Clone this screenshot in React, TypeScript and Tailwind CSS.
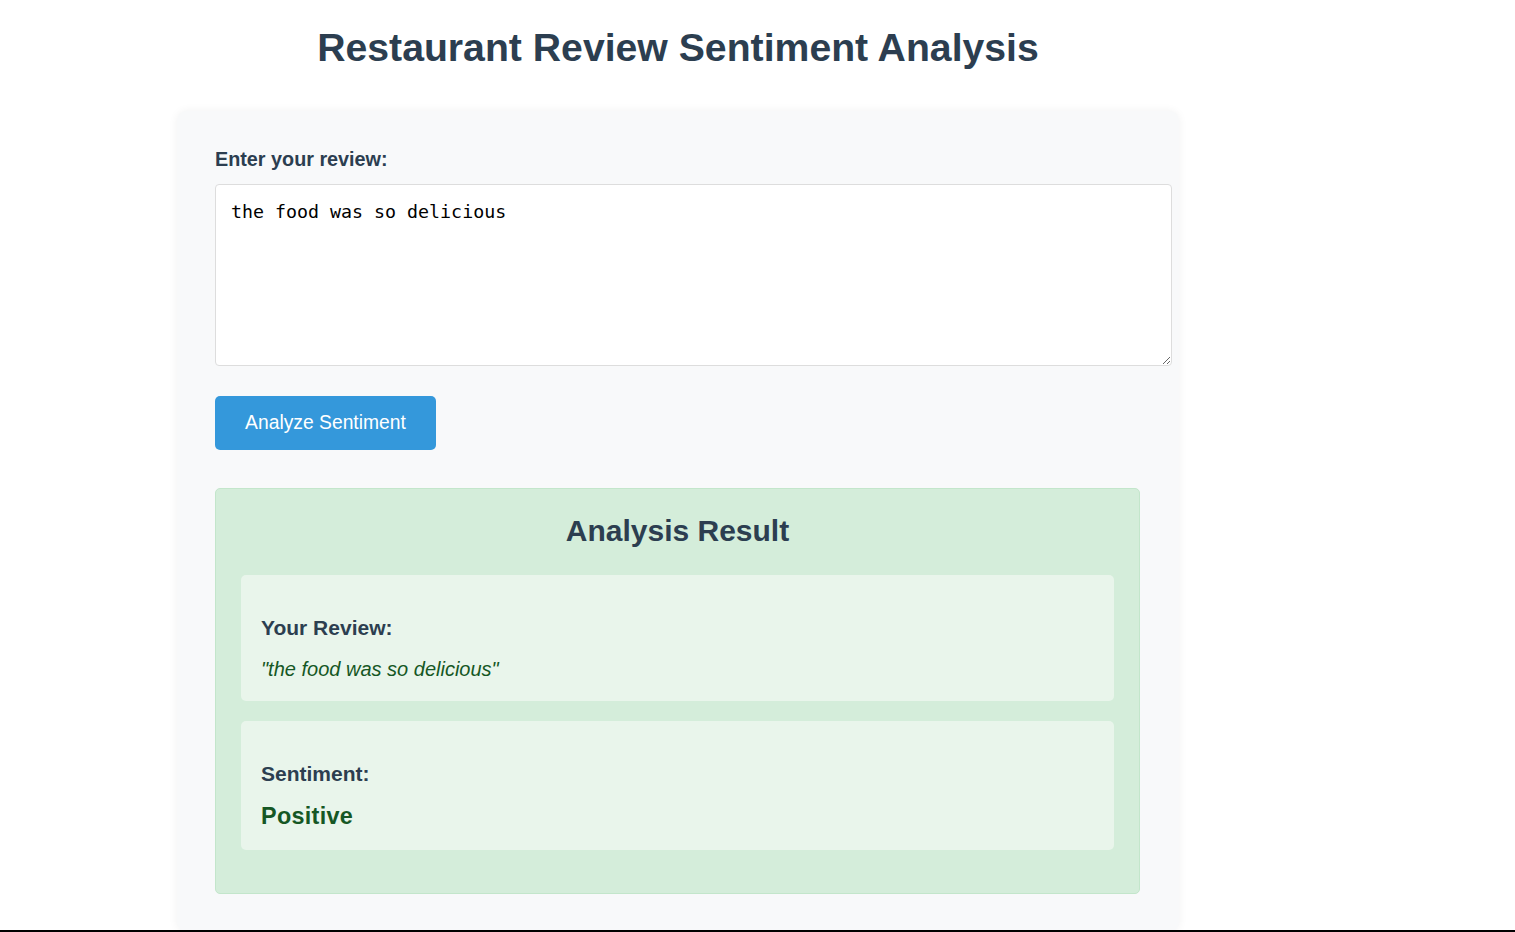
import { useState } from "react";
import type { ReactElement } from "react";

const sans = "font-['Liberation_Sans',Arial,sans-serif]";

function ResultBlock({ title, children }: { title: string; children: ReactElement }): ReactElement {
  return (
    <div className="rounded-[5px] bg-[#e9f5eb] px-[20px] pt-[41px] pb-[20px]">
      <h3 className="text-[21px] leading-[24px] font-bold text-[#2c3e50]">{title}</h3>
      {children}
    </div>
  );
}

export default function App(): ReactElement {
  const [review, setReview] = useState("the food was so delicious");

  return (
    <div className={`min-h-[932px] bg-white ${sans}`}>
      <h1 className="w-[1002px] ml-[177px] pt-[25px] text-center text-[39.2px] leading-[46px] font-bold text-[#2c3e50]">
        Restaurant Review Sentiment Analysis
      </h1>

      <main className="mt-[40px] ml-[177px] w-[1002px] rounded-[10px] bg-[#f8f9fa] pl-[38px] pr-[39px] pt-[37px] pb-[38px] shadow-[0_0_10px_rgba(0,0,0,0.06)]">
        <label htmlFor="review" className="block text-[19.8px] leading-[23px] font-bold text-[#2c3e50] mb-[13px]">
          Enter your review:
        </label>
        <textarea
          id="review"
          value={review}
          onChange={(e) => setReview(e.target.value)}
          className="block box-content w-full h-[150px] rounded-[4px] border border-[#dddddd] bg-white px-[15px] pt-[16px] pb-[14px] font-['DejaVu_Sans_Mono',monospace] text-[18.3px] leading-[22px] text-black outline-none"
        />

        <button
          type="button"
          className="mt-[30px] h-[54px] w-[221px] rounded-[5px] bg-[#3498db] text-[19.3px] text-white"
        >
          Analyze Sentiment
        </button>

        <section className="mt-[38px] rounded-[5px] border border-[#c3e6cb] bg-[#d4edda] px-[25px] pt-[25px] pb-[43px]">
          <h2 className="text-center text-[30px] leading-[34px] font-bold text-[#2c3e50] mb-[27px]">Analysis Result</h2>
          <div className="flex flex-col gap-[20px]">
            <ResultBlock title="Your Review:">
              <p className="mt-[18px] text-[20px] leading-[23px] italic text-[#155724]">"{review}"</p>
            </ResultBlock>
            <ResultBlock title="Sentiment:">
              <p className="mt-[16px] text-[23.4px] leading-[28px] font-bold tracking-[0.3px] text-[#155724]">Positive</p>
            </ResultBlock>
          </div>
        </section>
      </main>

      <div className="fixed left-0 right-0 bottom-0 h-[2px] bg-black" />
    </div>
  );
}
